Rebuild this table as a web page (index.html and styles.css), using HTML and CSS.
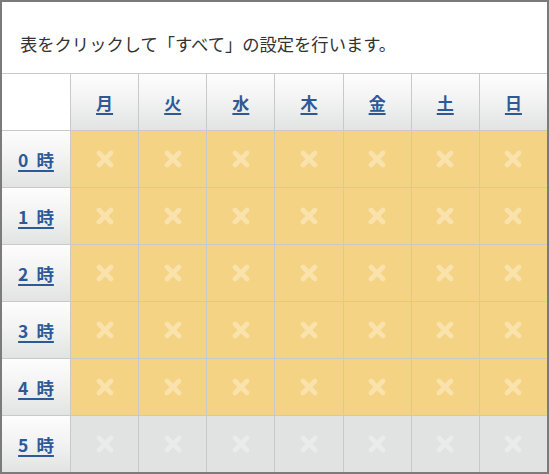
FILE: index.html
```html
<!DOCTYPE html>
<html lang="ja">
<head>
<meta charset="utf-8">
<link rel="stylesheet" href="styles.css">
</head>
<body>
<div class="panel">
  <div class="intro">表をクリックして「すべて」の設定を行います。</div>
  <div class="grid">
    <div class="corner"></div>
    <div class="head"><a href="#">月</a></div>
    <div class="head"><a href="#">火</a></div>
    <div class="head"><a href="#">水</a></div>
    <div class="head"><a href="#">木</a></div>
    <div class="head"><a href="#">金</a></div>
    <div class="head"><a href="#">土</a></div>
    <div class="head"><a href="#">日</a></div>

    <div class="rowhead"><a href="#">0 時</a></div>
    <div class="cell on"><svg class="x" viewBox="0 0 18 18"><path d="M3 3L15 15M15 3L3 15"/></svg></div>
    <div class="cell on"><svg class="x" viewBox="0 0 18 18"><path d="M3 3L15 15M15 3L3 15"/></svg></div>
    <div class="cell on"><svg class="x" viewBox="0 0 18 18"><path d="M3 3L15 15M15 3L3 15"/></svg></div>
    <div class="cell on"><svg class="x" viewBox="0 0 18 18"><path d="M3 3L15 15M15 3L3 15"/></svg></div>
    <div class="cell on"><svg class="x" viewBox="0 0 18 18"><path d="M3 3L15 15M15 3L3 15"/></svg></div>
    <div class="cell on"><svg class="x" viewBox="0 0 18 18"><path d="M3 3L15 15M15 3L3 15"/></svg></div>
    <div class="cell on"><svg class="x" viewBox="0 0 18 18"><path d="M3 3L15 15M15 3L3 15"/></svg></div>

    <div class="rowhead"><a href="#">1 時</a></div>
    <div class="cell on"><svg class="x" viewBox="0 0 18 18"><path d="M3 3L15 15M15 3L3 15"/></svg></div>
    <div class="cell on"><svg class="x" viewBox="0 0 18 18"><path d="M3 3L15 15M15 3L3 15"/></svg></div>
    <div class="cell on"><svg class="x" viewBox="0 0 18 18"><path d="M3 3L15 15M15 3L3 15"/></svg></div>
    <div class="cell on"><svg class="x" viewBox="0 0 18 18"><path d="M3 3L15 15M15 3L3 15"/></svg></div>
    <div class="cell on"><svg class="x" viewBox="0 0 18 18"><path d="M3 3L15 15M15 3L3 15"/></svg></div>
    <div class="cell on"><svg class="x" viewBox="0 0 18 18"><path d="M3 3L15 15M15 3L3 15"/></svg></div>
    <div class="cell on"><svg class="x" viewBox="0 0 18 18"><path d="M3 3L15 15M15 3L3 15"/></svg></div>

    <div class="rowhead"><a href="#">2 時</a></div>
    <div class="cell on"><svg class="x" viewBox="0 0 18 18"><path d="M3 3L15 15M15 3L3 15"/></svg></div>
    <div class="cell on"><svg class="x" viewBox="0 0 18 18"><path d="M3 3L15 15M15 3L3 15"/></svg></div>
    <div class="cell on"><svg class="x" viewBox="0 0 18 18"><path d="M3 3L15 15M15 3L3 15"/></svg></div>
    <div class="cell on"><svg class="x" viewBox="0 0 18 18"><path d="M3 3L15 15M15 3L3 15"/></svg></div>
    <div class="cell on"><svg class="x" viewBox="0 0 18 18"><path d="M3 3L15 15M15 3L3 15"/></svg></div>
    <div class="cell on"><svg class="x" viewBox="0 0 18 18"><path d="M3 3L15 15M15 3L3 15"/></svg></div>
    <div class="cell on"><svg class="x" viewBox="0 0 18 18"><path d="M3 3L15 15M15 3L3 15"/></svg></div>

    <div class="rowhead"><a href="#">3 時</a></div>
    <div class="cell on"><svg class="x" viewBox="0 0 18 18"><path d="M3 3L15 15M15 3L3 15"/></svg></div>
    <div class="cell on"><svg class="x" viewBox="0 0 18 18"><path d="M3 3L15 15M15 3L3 15"/></svg></div>
    <div class="cell on"><svg class="x" viewBox="0 0 18 18"><path d="M3 3L15 15M15 3L3 15"/></svg></div>
    <div class="cell on"><svg class="x" viewBox="0 0 18 18"><path d="M3 3L15 15M15 3L3 15"/></svg></div>
    <div class="cell on"><svg class="x" viewBox="0 0 18 18"><path d="M3 3L15 15M15 3L3 15"/></svg></div>
    <div class="cell on"><svg class="x" viewBox="0 0 18 18"><path d="M3 3L15 15M15 3L3 15"/></svg></div>
    <div class="cell on"><svg class="x" viewBox="0 0 18 18"><path d="M3 3L15 15M15 3L3 15"/></svg></div>

    <div class="rowhead"><a href="#">4 時</a></div>
    <div class="cell on"><svg class="x" viewBox="0 0 18 18"><path d="M3 3L15 15M15 3L3 15"/></svg></div>
    <div class="cell on"><svg class="x" viewBox="0 0 18 18"><path d="M3 3L15 15M15 3L3 15"/></svg></div>
    <div class="cell on"><svg class="x" viewBox="0 0 18 18"><path d="M3 3L15 15M15 3L3 15"/></svg></div>
    <div class="cell on"><svg class="x" viewBox="0 0 18 18"><path d="M3 3L15 15M15 3L3 15"/></svg></div>
    <div class="cell on"><svg class="x" viewBox="0 0 18 18"><path d="M3 3L15 15M15 3L3 15"/></svg></div>
    <div class="cell on"><svg class="x" viewBox="0 0 18 18"><path d="M3 3L15 15M15 3L3 15"/></svg></div>
    <div class="cell on"><svg class="x" viewBox="0 0 18 18"><path d="M3 3L15 15M15 3L3 15"/></svg></div>

    <div class="rowhead"><a href="#">5 時</a></div>
    <div class="cell off"><svg class="x" viewBox="0 0 18 18"><path d="M3 3L15 15M15 3L3 15"/></svg></div>
    <div class="cell off"><svg class="x" viewBox="0 0 18 18"><path d="M3 3L15 15M15 3L3 15"/></svg></div>
    <div class="cell off"><svg class="x" viewBox="0 0 18 18"><path d="M3 3L15 15M15 3L3 15"/></svg></div>
    <div class="cell off"><svg class="x" viewBox="0 0 18 18"><path d="M3 3L15 15M15 3L3 15"/></svg></div>
    <div class="cell off"><svg class="x" viewBox="0 0 18 18"><path d="M3 3L15 15M15 3L3 15"/></svg></div>
    <div class="cell off"><svg class="x" viewBox="0 0 18 18"><path d="M3 3L15 15M15 3L3 15"/></svg></div>
    <div class="cell off"><svg class="x" viewBox="0 0 18 18"><path d="M3 3L15 15M15 3L3 15"/></svg></div>
  </div>
</div>
</body>
</html>
```

FILE: styles.css
```css
html, body {
  margin: 0;
  padding: 0;
  background: #ffffff;
}

.panel {
  width: 549px;
  height: 474px;
  box-sizing: border-box;
  border: 2px solid #7b7b7b;
  background: #ffffff;
  font-family: "Noto Sans CJK JP", "Noto Sans", sans-serif;
}

.intro {
  height: 71px;
  box-sizing: border-box;
  padding: 12px 0 0 18px;
  display: flex;
  align-items: center;
  font-size: 17.3px;
  color: #333333;
}

.grid {
  display: grid;
  grid-template-columns: 68px repeat(7, 1fr);
  grid-auto-rows: 56px;
  gap: 1px;
  background: #c9c9c9;
  border-top: 1px solid #c9c9c9;
}

.corner {
  background: #ffffff;
}

.head,
.rowhead {
  display: flex;
  align-items: center;
  justify-content: center;
  background: linear-gradient(to bottom, #fdfdfd 0%, #f3f3f3 45%, #e2e3e3 100%);
}

.head a,
.rowhead a {
  color: #2d5a97;
  font-weight: bold;
  font-size: 17px;
  text-decoration: underline;
  text-underline-offset: 3px;
  text-decoration-thickness: 2px;
}

.rowhead a {
  font-size: 17.5px;
  word-spacing: 4px;
}

.cell {
  display: flex;
  align-items: center;
  justify-content: center;
}

.cell.on {
  background: #f5d385;
}

.cell.off {
  background: #e1e2e2;
}

.x {
  width: 18px;
  height: 18px;
  fill: none;
  stroke-width: 4.6;
  stroke-linecap: round;
}

.on .x {
  stroke: #f9e2ab;
}

.off .x {
  stroke: #eaebeb;
}
```
